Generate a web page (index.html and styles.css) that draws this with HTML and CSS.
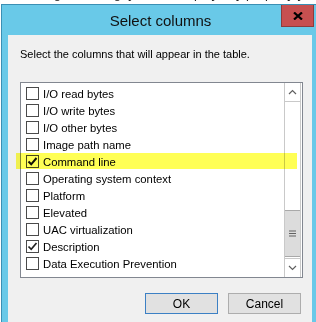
FILE: index.html
```html
<!DOCTYPE html>
<html lang="en">
<head>
    <meta charset="UTF-8">
    <title>Select columns</title>
    <link rel="stylesheet" href="styles.css">
</head>
<body>
    <div class="page-text">
        <div class="page-line">using the dialog, you can display any property you apply to your process list</div>
    </div>

    <div class="window">
        <div class="titlebar">
            <span class="title">Select columns</span>
            <div class="close-btn">
                <svg width="10" height="8" viewBox="0 0 10 8"><path d="M1 0.5 L9 7.5 M9 0.5 L1 7.5" stroke="#000" stroke-width="2.2"/></svg>
            </div>
        </div>

        <div class="client">
            <p class="hint">Select the columns that will appear in the table.</p>

            <div class="listbox">
                <div class="items">
                    <label class="item"><span class="box"></span>I/O read bytes</label>
                    <label class="item"><span class="box"></span>I/O write bytes</label>
                    <label class="item"><span class="box"></span>I/O other bytes</label>
                    <label class="item"><span class="box"></span>Image path name</label>
                    <label class="item"><span class="box checked"><svg width="11" height="11" viewBox="0 0 11 11"><path d="M1.5 5.5 L4.2 8.3 L9.5 2" fill="none" stroke="#111" stroke-width="2"/></svg></span>Command line</label>
                    <label class="item"><span class="box"></span>Operating system context</label>
                    <label class="item"><span class="box"></span>Platform</label>
                    <label class="item"><span class="box"></span>Elevated</label>
                    <label class="item"><span class="box"></span>UAC virtualization</label>
                    <label class="item"><span class="box checked"><svg width="11" height="11" viewBox="0 0 11 11"><path d="M1.5 5.5 L4.2 8.3 L9.5 2" fill="none" stroke="#222" stroke-width="1.7"/></svg></span>Description</label>
                    <label class="item"><span class="box"></span>Data Execution Prevention</label>
                </div>
                <div class="scrollbar">
                    <div class="arrow">
                        <svg width="9" height="6" viewBox="0 0 9 6"><path d="M1 5 L4.5 1.5 L8 5" fill="none" stroke="#606060" stroke-width="1.2"/></svg>
                    </div>
                    <div class="track"></div>
                    <div class="thumb">
                        <svg width="7" height="7" viewBox="0 0 7 7"><path d="M0 1 H7 M0 3.5 H7 M0 6 H7" stroke="#606060" stroke-width="1"/></svg>
                    </div>
                    <div class="arrow down">
                        <svg width="9" height="6" viewBox="0 0 9 6"><path d="M1 1 L4.5 4.5 L8 1" fill="none" stroke="#606060" stroke-width="1.2"/></svg>
                    </div>
                </div>
            </div>

            <div class="buttons">
                <button class="btn default">OK</button>
                <button class="btn">Cancel</button>
            </div>
        </div>
    </div>

    <!-- yellow marker drawn over the screenshot -->
    <div class="marker"></div>
</body>
</html>
```

FILE: styles.css
```css
body {
    margin: 0;
    width: 316px;
    height: 322px;
    overflow: hidden;
    background: #fff;
    font-family: 'Liberation Sans', Arial, sans-serif;
    font-size: 11px;
    color: #000;
    position: relative;
}

.page-text {
    height: 4px;
    overflow: hidden;
}

.page-line {
    margin-top: -13px;
    padding-left: 30px;
    line-height: 14px;
    font-size: 13px;
    white-space: nowrap;
    color: #222;
}

.window {
    margin-left: 1px;
    width: 314px;
    height: 400px;
    border-left: 1px solid #3b8fb4;
    border-top: 1px solid #3b8fb4;
    background: #69c9e8;
    padding-left: 6px;
}

.titlebar {
    height: 30px;
    position: relative;
    display: flex;
    justify-content: center;
    align-items: center;
}

.title {
    font-size: 15px;
    color: #111;
    margin-top: 1px;
    margin-right: 9px;
}

.close-btn {
    position: absolute;
    top: 0;
    left: 273px;
    width: 31px;
    height: 21px;
    background: #c75050;
    border: 1px solid #8d3c3c;
    border-top: none;
    display: flex;
    align-items: center;
    justify-content: center;
}

.client {
    width: 292px;
    height: 400px;
    background: #f0f0f0;
    padding-left: 12px;
}

.hint {
    margin: 0;
    padding-top: 12px;
    line-height: 14px;
}

.listbox {
    margin-top: 21px;
    width: 281px;
    height: 194px;
    border: 1px solid #828790;
    background: #fff;
    display: flex;
}

.items {
    flex-grow: 1;
    padding-top: 2px;
    overflow: hidden;
}

.item {
    display: flex;
    align-items: center;
    height: 17px;
    padding-left: 5px;
    gap: 4px;
    white-space: nowrap;
    font-size: 11.3px;
}

.box {
    width: 11px;
    height: 11px;
    border: 1px solid #4a4a4a;
    background: #fff;
    display: flex;
    align-items: center;
    justify-content: center;
    flex-shrink: 0;
}

.scrollbar {
    width: 17px;
    margin-right: 1px;
    display: flex;
    flex-direction: column;
    border-left: 1px solid #c9c9c9;
    border-right: 1px solid #c9c9c9;
    box-sizing: border-box;
    background: #fff;
}

.arrow {
    height: 18px;
    border-bottom: 1px solid #c9c9c9;
    display: flex;
    align-items: center;
    justify-content: center;
}

.arrow.down {
    border-bottom: none;
    border-top: 1px solid #c9c9c9;
}

.track {
    flex-grow: 1;
}

.thumb {
    height: 45px;
    margin-bottom: 1px;
    background: #dcdcdc;
    border-top: 1px solid #a9a9a9;
    border-bottom: 1px solid #a9a9a9;
    display: flex;
    align-items: center;
    justify-content: center;
}

.buttons {
    display: flex;
    justify-content: flex-end;
    gap: 10px;
    width: 281px;
    margin-top: 15px;
}

.btn {
    width: 73px;
    height: 21px;
    padding: 0;
    background: #e1e1e1;
    border: 1px solid #adadad;
    font-family: 'Liberation Sans', Arial, sans-serif;
    font-size: 12px;
    color: #000;
}

.btn.default {
    border-color: #3c80c4;
}

.marker {
    position: absolute;
    left: 16px;
    top: 153px;
    width: 281px;
    height: 16px;
    background: #ffff55;
    mix-blend-mode: multiply;
}
```
